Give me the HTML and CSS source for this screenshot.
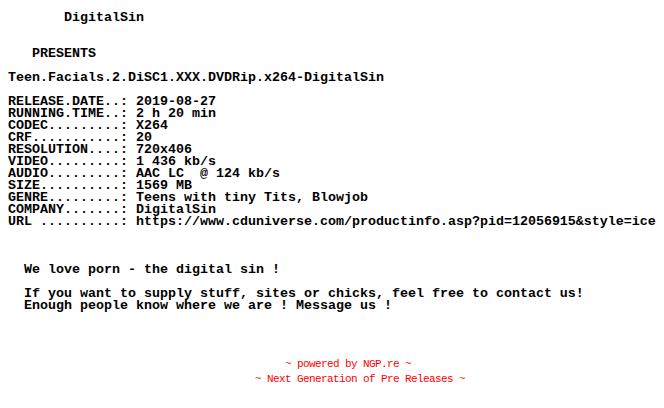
FILE: index.html
```html
<!DOCTYPE html>
<html>
<head>
<meta charset="utf-8">
<link rel="stylesheet" href="styles.css">
</head>
<body>
<pre class="nfo">       DigitalSin


   PRESENTS

Teen.Facials.2.DiSC1.XXX.DVDRip.x264-DigitalSin

RELEASE.DATE..: 2019-08-27
RUNNING.TIME..: 2 h 20 min
CODEC.........: X264
CRF...........: 20
RESOLUTION....: 720x406
VIDEO.........: 1 436 kb/s
AUDIO.........: AAC LC  @ 124 kb/s
SIZE..........: 1569 MB
GENRE.........: Teens with tiny Tits, Blowjob
COMPANY.......: DigitalSin
URL ..........: https://www.cduniverse.com/productinfo.asp?pid=12056915&amp;style=ice



  We love porn - the digital sin !

  If you want to supply stuff, sites or chicks, feel free to contact us!
  Enough people know where we are ! Message us !</pre>
<div class="footer">
<div class="fline">~ powered by NGP.re ~    </div>
<div class="fline">~ Next Generation of Pre Releases ~</div>
</div>
</body>
</html>
```
FILE: styles.css
```css
html, body {
  margin: 0;
  padding: 0;
  background: #ffffff;
}
.nfo {
  margin: 0;
  padding: 12px 0 0 8px;
  font-family: "Liberation Mono", monospace;
  font-weight: bold;
  font-size: 13.333px;
  line-height: 12px;
  color: #000000;
  white-space: pre;
}
.footer {
  margin-top: 45px;
  padding-left: 56px;
  display: flex;
  flex-direction: column;
  align-items: center;
  font-family: "Liberation Mono", monospace;
  font-size: 11px;
  letter-spacing: -0.6px;
  line-height: 15px;
  color: #ff0000;
}
.fline {
  white-space: pre;
}
```
